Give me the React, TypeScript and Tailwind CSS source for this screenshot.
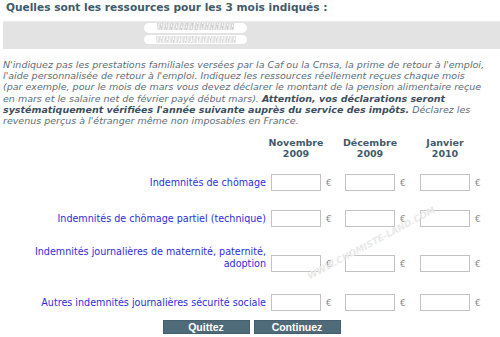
const lines = [
  "N'indiquez pas les prestations familiales versées par la Caf ou la Cmsa, la prime de retour à l'emploi,",
  "l'aide personnalisée de retour à l'emploi. Indiquez les ressources réellement reçues chaque mois",
  "(par exemple, pour le mois de mars vous devez déclarer le montant de la pension alimentaire reçue",
];

const months = [
  ["Novembre", "2009"],
  ["Décembre", "2009"],
  ["Janvier", "2010"],
];

const rows = [
  { label: ["Indemnités de chômage"], gap: "mt-[15px]" },
  { label: ["Indemnités de chômage partiel (technique)"], gap: "mt-[19px]" },
  { label: ["Indemnités journalières de maternité, paternité,", "adoption"], gap: "mt-[19px]" },
  { label: ["Autres indemnités journalières sécurité sociale"], gap: "mt-[22px]" },
];

function Cell() {
  return (
    <div className="flex items-center">
      <input
        type="text"
        className="h-[17px] w-[50px] border border-[#c3c3c3] bg-white outline-none"
      />
      <span className="ml-[5px] text-[9px] leading-[10px] text-[#8c8c8c]">€</span>
    </div>
  );
}

export default function App() {
  return (
    <div className="relative h-[337px] w-[500px] overflow-hidden bg-white font-['DejaVu_Sans',sans-serif]">
      <h1 className="pl-[6px] pt-[2px] text-[10.6px] font-bold leading-[11px] text-[#3f5b6b]">
        Quelles sont les ressources pour les 3 mois indiqués :
      </h1>

      <div className="ml-[3px] mt-[8px] flex h-[28px] flex-col gap-[2px] border-t border-[#ebebeb] bg-[#e3e3e3] pl-[141px] pt-[1px]">
        <div className="flex h-[10px] w-[103px] items-start justify-center rounded-full bg-white">
          <div className="h-[7px] w-[77px] bg-[repeating-linear-gradient(100deg,#c9c9c9_0px,#f2f2f2_2px,#d2d2d2_4px,#ffffff_5px)]" />
        </div>
        <div className="flex h-[9px] w-[103px] items-center justify-center rounded-full bg-white">
          <div className="h-[7px] w-[80px] bg-[repeating-linear-gradient(100deg,#d4d4d4_0px,#f6f6f6_2px,#dcdcdc_4px,#ffffff_6px)]" />
        </div>
      </div>

      <p className="mt-[10px] whitespace-nowrap px-[3px] text-[9.5px] italic leading-[11.2px] text-[#5d6d7a]">
        {lines.map((l) => (
          <span key={l} className="block">
            {l}
          </span>
        ))}
        <span className="block">
          en mars et le salaire net de février payé début mars).{" "}
          <b className="text-[#3c4f5e]">Attention, vos déclarations seront</b>
        </span>
        <span className="block">
          <b className="text-[#3c4f5e]">
            systématiquement vérifiées l'année suivante auprès du service des impôts.
          </b>{" "}
          Déclarez les
        </span>
        <span className="block">revenus perçus à l'étranger même non imposables en France.</span>
      </p>

      <div className="mt-[11px] grid grid-cols-[271px_74px_75px_75px]">
        <div />
        {months.map(([m, y]) => (
          <div
            key={m}
            className="flex w-[50px] flex-col items-center whitespace-nowrap text-[9.5px] font-bold leading-[11px] text-[#3f5b6b]"
          >
            <span>{m}</span>
            <span>{y}</span>
          </div>
        ))}
      </div>

      {rows.map((r) => (
        <div key={r.label[0]} className={`${r.gap} grid grid-cols-[271px_74px_75px_75px] items-end`}>
          <div className="pb-[2px] pr-[5px] text-right text-[9.6px] leading-[12px] text-[#2d2de0]">
            {r.label.map((t) => (
              <span key={t} className="block whitespace-nowrap">
                {t}
              </span>
            ))}
          </div>
          <Cell />
          <Cell />
          <Cell />
        </div>
      ))}

      <div className="mt-[9px] flex justify-center gap-[4px] pl-[3px]">
        <button className="h-[14px] w-[87px] border border-[#465f6c] bg-[#4f6a78] font-['Liberation_Sans',sans-serif] text-[10.5px] font-bold leading-[12px] text-white">
          Quittez
        </button>
        <button className="h-[14px] w-[87px] border border-[#465f6c] bg-[#4f6a78] font-['Liberation_Sans',sans-serif] text-[10.5px] font-bold leading-[12px] text-white">
          Continuez
        </button>
      </div>

      {/* filigrane */}
      <div className="pointer-events-none absolute left-[300px] top-[237px] -rotate-[28deg] whitespace-nowrap text-[9px] font-bold italic text-[#e9e9e9]">
        WWW.CHOMISTE-LAND.COM
      </div>
    </div>
  );
}
